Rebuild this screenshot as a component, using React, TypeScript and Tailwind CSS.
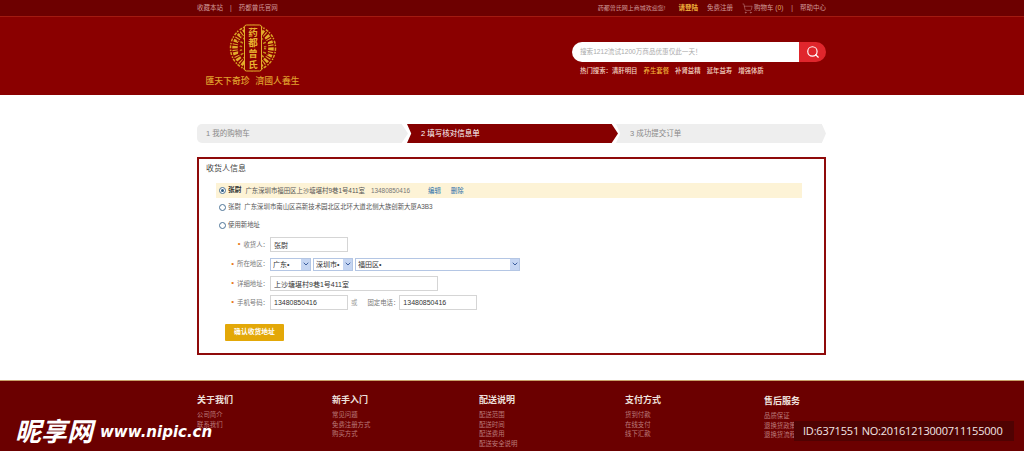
import React from "react";
import { ChevronDown, Search, ShoppingCart } from "lucide-react";

const hotWords = ["清肝明目", "养生套餐", "补肾益精", "延年益寿", "增强体质"];

const footerCols = [
  { w: "w-[135px]", title: "关于我们", links: ["公司简介", "联系我们"] },
  { w: "w-[147px]", title: "新手入门", links: ["常见问题", "免费注册方式", "购买方式"] },
  { w: "w-[146px]", title: "配送说明", links: ["配送范围", "配送时间", "配送费用", "配送安全说明"] },
  { w: "w-[139px]", title: "支付方式", links: ["货到付款", "在线支付", "线下汇款"] },
];

function Logo() {
  return (
    <svg width="48" height="48" viewBox="0 0 48 48" className="block">
      <circle cx="24" cy="24" r="22.5" fill="none" stroke="#d9a021" strokeWidth="1.5" strokeDasharray="3 1 1.5 1.5" />
      <circle cx="24" cy="24" r="18" fill="none" stroke="#e2ac2a" strokeWidth="5.5" strokeDasharray="2.5 1.2 1 1.5" />
      <circle cx="24" cy="24" r="12.5" fill="none" stroke="#c98f1c" strokeWidth="3" strokeDasharray="1.5 2.5" />
      <path d="M8 16 Q13 22 9 31 M40 16 Q35 22 39 31 M11 11 Q17 17 14 26 M37 11 Q31 17 34 26" fill="none" stroke="#8a0000" strokeWidth="1" />
      <rect x="15.5" y="1" width="17" height="46" rx="2" fill="#8a0000" stroke="#e2ac2a" strokeWidth="1" />
      <g fill="#e8b230" fontSize="9.5" fontWeight="700" textAnchor="middle" fontFamily="'Noto Sans CJK SC', sans-serif">
        <text x="24" y="11.5">药</text>
        <text x="24" y="22">都</text>
        <text x="24" y="33">曾</text>
        <text x="24" y="44">氏</text>
      </g>
    </svg>
  );
}

function Required({ label }: { label: string }) {
  return (
    <div className="w-[64px] flex justify-end items-center pr-[1px] text-[6.4px] text-[#777] whitespace-nowrap">
      <span className="text-[#e8791a] mr-[3px] text-[8px] leading-none">•</span>
      {label}：
    </div>
  );
}

function Field({ value, w }: { value: string; w: string }) {
  return (
    <input
      readOnly
      value={value}
      className={`${w} h-[15px] border border-[#d5d5d5] bg-white px-[3px] text-[7px] text-[#333] outline-none`}
    />
  );
}

function Picker({ value, w }: { value: string; w: string }) {
  return (
    <div className={`relative ${w} h-[13px]`}>
      <select className="block w-full h-full appearance-none border border-[#b4c6e4] bg-white pl-[2px] text-[7px] leading-[11px] text-[#333] outline-none rounded-none">
        <option>{value}</option>
      </select>
      <div className="absolute right-px top-px bottom-px w-[9px] bg-[#c5d5f2] flex items-center justify-center">
        <ChevronDown size={8} strokeWidth={3} className="text-[#3d5f9e]" />
      </div>
    </div>
  );
}

function Radio({ checked }: { checked?: boolean }) {
  return (
    <span className="w-[7px] h-[7px] rounded-full border border-[#4c7396] bg-white flex items-center justify-center shrink-0">
      {checked && <span className="w-[3px] h-[3px] rounded-full bg-[#2c5a80]" />}
    </span>
  );
}

export default function App() {
  return (
    <div className="relative w-[1024px] h-[451px] overflow-hidden bg-white font-['Liberation_Sans','Noto_Sans_CJK_SC',sans-serif]">
      {/* top bar */}
      <div className="h-[17px] bg-[#6d0000] border-b border-[#a31a10]">
        <div className="w-[629px] ml-[197px] h-full flex items-center justify-between text-[6.5px] text-[#cf9a9a]">
          <div className="flex items-center">
            <span>收藏本站</span>
            <span className="mx-[7px]">|</span>
            <span>药都曾氏官网</span>
          </div>
          <div className="flex items-center">
            <span className="text-[6px]">药都曾氏网上商城欢迎您!</span>
            <span className="ml-[13px] text-[#f0b13c] font-bold">请登陆</span>
            <span className="ml-[9px]">免费注册</span>
            <ShoppingCart size={11} strokeWidth={1} className="ml-[9px] mr-[1px] text-[#cf9a9a]" />
            <span>购物车 (<span className="text-[#f0b13c]">0</span>)</span>
            <span className="ml-[8px] mr-[7px]">|</span>
            <span>帮助中心</span>
          </div>
        </div>
      </div>

      {/* header */}
      <div className="h-[78px] bg-[#8a0000]">
        <div className="w-[629px] ml-[197px] flex justify-between">
          <div className="w-[103px] pl-[8px] pt-[7px] flex flex-col items-center">
            <Logo />
            <div className="mt-[3px] text-[8.8px] leading-[12px] whitespace-nowrap text-[#e0a02e] flex gap-[6px] font-medium">
              <span>匯天下奇珍</span>
              <span>濟國人養生</span>
            </div>
          </div>
          <div className="w-[254px] pt-[25px]">
            <div className="flex h-[20px]">
              <div className="flex-1 bg-white rounded-l-full pl-[8px] flex items-center text-[6.6px] text-[#aaa]">
                搜索1212流试1200万商品优惠仅此一天！
              </div>
              <div className="w-[27px] bg-[#e0262c] rounded-r-full flex items-center justify-center">
                <Search size={14} strokeWidth={2} className="text-white" />
              </div>
            </div>
            <div className="mt-[4px] pl-[8px] flex text-[6.4px] leading-[10px] text-[#f5d8c8] font-medium whitespace-nowrap">
              <span>热门搜索：</span>
              {hotWords.map((word, i) => (
                <span key={word} className={`mr-[6px] ${i === 1 ? "text-[#f3b23a]" : ""}`}>
                  {word}
                </span>
              ))}
            </div>
          </div>
        </div>
      </div>

      {/* main */}
      <div className="w-[629px] ml-[197px] pt-[29px]">
        <div className="flex h-[19px] text-[7.5px] leading-[19px]">
          <div className="w-[211px] bg-[#eeeeee] rounded-l-[5px] pl-[9px] text-[#888] [clip-path:polygon(0_0,97%_0,100%_50%,97%_100%,0_100%)]">
            1 我的购物车
          </div>
          <div className="w-[211px] -ml-[1px] bg-[#860000] pl-[14px] text-white [clip-path:polygon(0_0,97%_0,100%_50%,97%_100%,0_100%,2%_50%)]">
            2 填写核对信息单
          </div>
          <div className="w-[210px] -ml-[2px] bg-[#eeeeee] pl-[14px] text-[#888] [clip-path:polygon(0_0,98%_0,100%_50%,98%_100%,0_100%,2%_50%)]">
            3 成功提交订单
          </div>
        </div>

        <div className="mt-[14px] h-[198px] border-2 border-[#8f0a0a] pl-[7px] pr-[22px] pt-[4px]">
          <div className="text-[8px] leading-[12px] text-[#444]">收货人信息</div>

          <div className="mt-[8px] ml-[10px] h-[15px] bg-[#fdf3d6] pl-[3px] flex items-center text-[6.4px] text-[#666]">
            <Radio checked />
            <span className="ml-[2px] font-bold text-[#333] text-[6.7px]">张尉</span>
            <span className="ml-[4px] text-[#555]">广东深圳市福田区上沙塘堪村9巷1号411室</span>
            <span className="ml-[6px] text-[#777]">13480850416</span>
            <span className="ml-[18px] text-[#2a6fa8]">编辑</span>
            <span className="ml-[10px] text-[#2a6fa8]">删除</span>
          </div>

          <div className="mt-[2px] ml-[13px] h-[14px] flex items-center text-[6.4px] text-[#555]">
            <Radio />
            <span className="ml-[2px]">张尉&nbsp;&nbsp;广东深圳市南山区高新技术园北区北环大道北侧大族创新大厦A3B3</span>
          </div>

          <div className="mt-[4px] ml-[13px] h-[14px] flex items-center text-[6.4px] text-[#555]">
            <Radio />
            <span className="ml-[2px]">使用新地址</span>
          </div>

          <div className="mt-[5px] flex items-center h-[15px]">
            <Required label="收货人" />
            <Field value="张尉" w="w-[78px]" />
          </div>

          <div className="mt-[5px] flex items-center h-[14px]">
            <Required label="所在地区" />
            <div className="flex gap-[2px]">
              <Picker value="广东•" w="w-[41px]" />
              <Picker value="深圳市•" w="w-[40px]" />
              <Picker value="福田区•" w="w-[165px]" />
            </div>
          </div>

          <div className="mt-[5px] flex items-center h-[15px]">
            <Required label="详细地址" />
            <Field value="上沙塘堪村9巷1号411室" w="w-[168px]" />
          </div>

          <div className="mt-[4px] flex items-center h-[15px]">
            <Required label="手机号码" />
            <Field value="13480850416" w="w-[78px]" />
            <span className="ml-[3px] text-[6.4px] text-[#999]">或</span>
            <span className="ml-[10px] text-[6.4px] text-[#777]">固定电话：</span>
            <Field value="13480850416" w="w-[78px]" />
          </div>

          <button className="mt-[14px] ml-[19px] w-[59px] h-[17px] rounded-[1px] bg-[#e3a808] text-[6.8px] font-bold text-white block">
            确认收货地址
          </button>
        </div>
      </div>

      {/* footer */}
      <div className="mt-[25px] h-[71px] bg-[#6b0000] border-t border-[#c9a26a]">
        <div className="w-[629px] ml-[197px] flex pt-[12px]">
          {footerCols.map((col) => (
            <div key={col.title} className={col.w}>
              <div className="text-[9px] leading-[14px] font-bold text-[#eee0dc]">{col.title}</div>
              <ul className="mt-[3px] text-[6.4px] leading-[9.6px] text-[#bb7a7a]">
                {col.links.map((link) => (
                  <li key={link}>{link}</li>
                ))}
              </ul>
            </div>
          ))}
          <div className="pt-[1px]">
            <div className="text-[9px] leading-[14px] font-bold text-[#eee0dc]">售后服务</div>
            <ul className="mt-[3px] text-[6.4px] leading-[9.6px] text-[#bb7a7a]">
              <li>品质保证</li>
              <li>退换货政策</li>
              <li>退换货流程</li>
            </ul>
          </div>
        </div>
      </div>

      {/* watermark */}
      <div className="absolute left-[15px] top-[417px] flex items-center text-white italic font-bold whitespace-nowrap">
        <span className="text-[26px] leading-[30px]">昵享网</span>
        <span className="ml-[7px] text-[15px] leading-[30px] font-['DejaVu_Sans',sans-serif]">www.nipic.cn</span>
      </div>
      <div className="absolute left-[794px] top-[421px] w-[220px] h-[20px] bg-[#4f0202] pl-[9px] text-[11px] tracking-[-0.2px] leading-[20px] text-[#f3e6e6] font-['Open_Sans',sans-serif] whitespace-nowrap">
        ID:6371551 NO:20161213000711155000
      </div>
    </div>
  );
}
